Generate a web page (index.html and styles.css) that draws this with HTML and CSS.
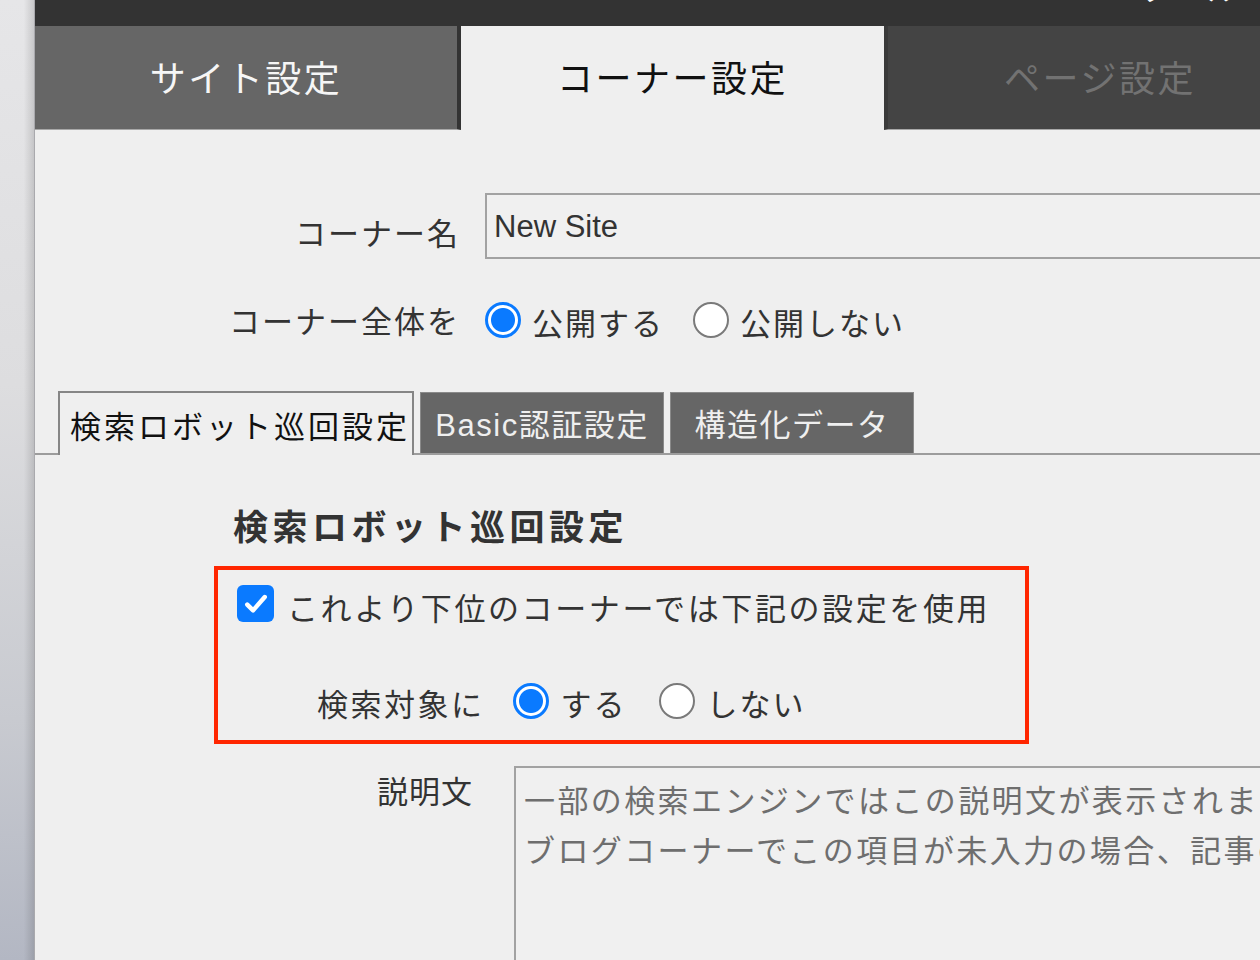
FILE: index.html
```html
<!DOCTYPE html>
<html lang="ja">
<head>
<meta charset="utf-8">
<title>コーナー設定</title>
<link rel="stylesheet" href="styles.css">
</head>
<body>
<div class="app">
  <div class="side"></div>
  <div class="main">
    <div class="topbar"><span class="topbar-text">ツール</span></div>
    <div class="tabs">
      <div class="tab tab-site">サイト設定</div>
      <div class="tab tab-corner">コーナー設定</div>
      <div class="tab tab-page">ページ設定</div>
    </div>

    <div class="form">
      <div class="row row-name">
        <span class="lbl">コーナー名</span>
        <div class="input">New Site</div>
      </div>
      <div class="row row-pub">
        <span class="lbl">コーナー全体を</span>
        <span class="radio on"></span><span class="opt">公開する</span>
        <span class="radio"></span><span class="opt">公開しない</span>
      </div>
    </div>

    <div class="subtabs">
      <div class="subtab active">検索ロボット巡回設定</div>
      <div class="subtab">Basic認証設定</div>
      <div class="subtab">構造化データ</div>
    </div>

    <div class="panel">
      <h2 class="heading">検索ロボット巡回設定</h2>
      <div class="redbox">
        <div class="check-row">
          <span class="checkbox">
            <svg viewBox="0 0 24 24" width="28" height="28"><path d="M4.5 12.5 L9.5 17.5 L19.5 6" fill="none" stroke="#fff" stroke-width="3.8" stroke-linecap="round" stroke-linejoin="round"/></svg>
          </span>
          <span class="check-text">これより下位のコーナーでは下記の設定を使用</span>
        </div>
        <div class="target-row">
          <span class="lbl2">検索対象に</span>
          <span class="radio on"></span><span class="opt">する</span>
          <span class="radio"></span><span class="opt">しない</span>
        </div>
      </div>
      <div class="desc-row">
        <span class="lbl3">説明文</span>
        <div class="textarea">一部の検索エンジンではこの説明文が表示されます。<br>ブログコーナーでこの項目が未入力の場合、記事の本文が使用されます。</div>
      </div>
    </div>
  </div>
</div>
</body>
</html>
```

FILE: styles.css
```css
html, body {
  margin: 0;
  padding: 0;
  height: 100%;
  overflow: hidden;
  background: #efefef;
}
body {
  font-family: "Noto Sans CJK JP", "Noto Sans", sans-serif;
  color: #333;
}
.app {
  display: flex;
  width: 1260px;
  height: 960px;
  overflow: hidden;
}
.side {
  width: 34px;
  flex: none;
  border-right: 1px solid #a9a9ad;
  background:
    linear-gradient(to right, rgba(0,0,0,0) 70%, rgba(0,0,0,0.13)),
    linear-gradient(to bottom, #e6e6e8 0%, #dddddf 40%, #c8cad0 75%, #b3b7c3 100%);
}
.main {
  flex: 1;
  min-width: 0;
  overflow: hidden;
  background: #efefef;
}
.topbar {
  height: 26px;
  background: #333;
  display: flex;
  justify-content: flex-end;
  align-items: flex-start;
  overflow: hidden;
}
.topbar-text {
  color: #fff;
  font-size: 34px;
  font-weight: bold;
  line-height: 34px;
  margin-top: -31px;
  margin-right: 20px;
  white-space: nowrap;
}
.tabs {
  display: flex;
  height: 104px;
  white-space: nowrap;
}
.tab {
  flex: none;
  display: flex;
  align-items: center;
  justify-content: center;
  font-size: 36px;
  letter-spacing: 2.5px;
  box-sizing: border-box;
  padding-bottom: 4px;
}
.tab-site {
  width: 426px;
  background: #666;
  color: #f6f6f6;
  border-right: 4px solid #333;
  border-bottom: 1px solid #a8a8a8;
}
.tab-corner {
  width: 423px;
  background: #efefef;
  color: #111;
}
.tab-page {
  width: 428px;
  background: #444;
  color: #727272;
  border-left: 4px solid #3a3a3a;
  border-bottom: 1px solid #a8a8a8;
}

.form {
  padding-top: 63px;
}
.row {
  display: flex;
  align-items: center;
  white-space: nowrap;
}
.lbl {
  width: 425px;
  flex: none;
  text-align: right;
  font-size: 31px;
  letter-spacing: 2px;
  margin-right: 25px;
  color: #333;
}
.row-name .lbl {
  padding-top: 10px;
}
.input {
  flex: none;
  width: 900px;
  height: 66px;
  box-sizing: border-box;
  border: 2px solid #a2a2a2;
  background: #f0f0f0;
  font-family: "Liberation Sans", Arial, sans-serif;
  font-size: 31px;
  color: #333;
  display: flex;
  align-items: center;
  padding-left: 7px;
  padding-top: 2px;
}
.row-pub {
  margin-top: 41px;
  height: 40px;
}
.row-pub .lbl {
  padding-bottom: 2px;
}
.radio {
  flex: none;
  width: 36px;
  height: 36px;
  box-sizing: border-box;
  border-radius: 50%;
  border: 2px solid #7a7a7a;
  background: #fff;
}
.radio.on {
  border: 3px solid #0a7aff;
  background: radial-gradient(circle, #0a7aff 0, #0a7aff 11.5px, #fff 12.5px);
}
.opt {
  font-size: 31px;
  letter-spacing: 2px;
  margin-left: 11px;
  margin-right: 29px;
  padding-top: 2px;
  color: #333;
}

.subtabs {
  margin-top: 51px;
  display: flex;
  align-items: flex-end;
  padding-left: 23px;
  border-bottom: 2px solid #9c9c9c;
  height: 62px;
  white-space: nowrap;
}
.subtab {
  flex: none;
  height: 61px;
  box-sizing: border-box;
  width: 244px;
  margin-right: 6px;
  background: #666;
  color: #efefef;
  font-family: "Liberation Sans", "Noto Sans CJK JP", sans-serif;
  font-size: 31px;
  letter-spacing: 1.5px;
  display: flex;
  align-items: center;
  justify-content: center;
  padding-bottom: 2px;
  border: 1px solid #8a8a8a;
  border-bottom: none;
}
.subtab.active {
  width: 356px;
  height: 64px;
  margin-bottom: -2px;
  background: #efefef;
  color: #111;
  border: 2px solid #868686;
  border-bottom: none;
  justify-content: flex-start;
  padding-left: 10px;
  padding-bottom: 0;
  font-family: "Noto Sans CJK JP", sans-serif;
  letter-spacing: 3px;
}

.panel {
  padding-top: 50px;
}
.heading {
  margin: 0 0 21px 198px;
  font-size: 35px;
  line-height: 40px;
  font-weight: bold;
  letter-spacing: 4.5px;
  color: #333;
}
.redbox {
  margin-left: 179px;
  width: 815px;
  height: 178px;
  box-sizing: border-box;
  border: 4px solid #ff2600;
  padding: 15px 0 0 19px;
}
.check-row {
  display: flex;
  align-items: center;
  height: 37px;
  white-space: nowrap;
}
.checkbox {
  flex: none;
  width: 37px;
  height: 37px;
  border-radius: 6px;
  background: #0a7aff;
  display: flex;
  align-items: center;
  justify-content: center;
}
.check-text {
  margin-left: 13px;
  font-size: 31px;
  letter-spacing: 2.6px;
  padding-top: 5px;
  color: #333;
}
.target-row {
  display: flex;
  align-items: center;
  height: 40px;
  margin-top: 59px;
  padding-left: 80px;
  white-space: nowrap;
}
.lbl2 {
  font-size: 31px;
  letter-spacing: 2.5px;
  margin-right: 28px;
  padding-top: 2px;
  color: #333;
}
.target-row .opt {
  margin-left: 12px;
  margin-right: 32px;
}
.desc-row {
  display: flex;
  align-items: flex-start;
  margin-top: 22px;
  white-space: nowrap;
}
.lbl3 {
  width: 438px;
  flex: none;
  text-align: right;
  font-size: 31px;
  letter-spacing: 1px;
  padding-top: 1px;
  margin-right: 41px;
  color: #333;
}
.textarea {
  flex: none;
  width: 900px;
  height: 260px;
  box-sizing: border-box;
  border: 2px solid #a2a2a2;
  background: #f0f0f0;
  padding: 6px 0 0 8px;
  font-size: 31px;
  line-height: 50px;
  letter-spacing: 2.4px;
  color: #6e6e6e;
}
```
